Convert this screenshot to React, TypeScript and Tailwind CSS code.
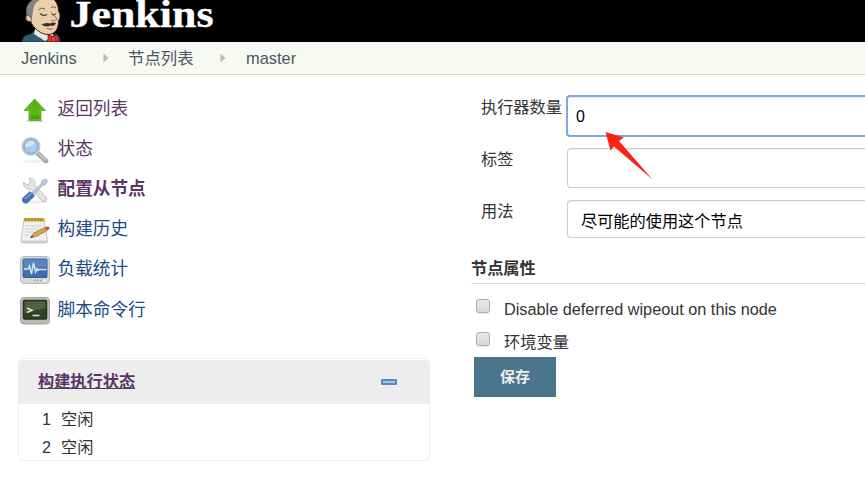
import React from "react";

const FONT = "font-['Liberation_Sans','Noto_Sans_CJK_SC',sans-serif]";

function Butler() {
  return (
    <svg className="block h-[42px] w-[42px] shrink-0" viewBox="0 0 42 42">
      <path d="M1 42 C2 37 4 35 9 34.500 L14 31 L26 38 L34 34 C38 35 39 38 39 42Z" fill="#335b6f" stroke="#1d3a49" strokeWidth="1" />
      <path d="M14 29 L13 34 L24 41 L32 36 L32 30Z" fill="#e9e9e8" />
      <path d="M8 20.500 C4 22 3 15 7 15 C4 5 11 -2 22 -3 C33 -4 37 2 37.500 11 C40 15 39 18 37.500 21 C37.500 29 34 34 28 34.500 C20 35 12 28 9.500 21 Z" fill="#e9cfae" stroke="#35281f" strokeWidth="1" />
      <path d="M6 17 C3 7 8 -1 19 -3 L24 -2 C17 0 13 3 12.500 9 L11 17 L9.500 21Z" fill="#83827f" />
      <path d="M8 15.500 C4 14 4 21 8 21.500 C10 22 10.500 20 10.500 18.500 Z" fill="#e9cfae" stroke="#4b3a2d" strokeWidth=".8" />
      <path d="M17.500 10 Q20 6.500 24 9 M30 7.500 Q33 5.500 35 8" fill="none" stroke="#6f5a4a" strokeWidth="1" />
      <path d="M19 13.500 Q22 16.500 26 14.500 M31 14 Q33 16 35 13.500" fill="none" stroke="#4a3a2e" strokeWidth="1.200" />
      <path d="M30 12 Q34 16 36 19 Q34 22 30 20.500" fill="none" stroke="#8c7053" strokeWidth="1" />
      <path d="M20.500 24.500 Q25 22 29 23.500 Q33 21.500 35 23.500 Q33 27 29.500 25.500 Q25 28 20.500 24.500Z" fill="#3b2d24" />
      <path d="M26 28.500 Q29 30 32 28.500" fill="none" stroke="#8c6852" strokeWidth="1" />
      <path d="M27 35 Q29 34 32 37 L36 34.500 Q38.500 37 37.500 42 L33 41 L27 42Z" fill="#d8302c" stroke="#6e1715" strokeWidth=".7" />
      <path d="M31 37h3v4.500h-3z" fill="#ef4a44" stroke="#8b1b19" strokeWidth=".6" />
    </svg>
  );
}

function UpIcon() {
  return (
    <svg className="block h-7 w-7" viewBox="0 0 28 28">
      <defs>
        <linearGradient id="up" x2="0" y2="1"><stop stopColor="#4da514" /><stop offset=".6" stopColor="#5cbd14" /><stop offset="1" stopColor="#3f9808" /></linearGradient>
      </defs>
      <ellipse cx="14" cy="25.300" rx="9.500" ry="1.400" fill="#e0e0e0" />
      <path d="M13.700 3 L24.500 14.500 H20 V24.500 H8 V14.500 H3Z" fill="url(#up)" stroke="#4aa012" strokeWidth=".7" />
      <path d="M13.700 4.700 L22.300 13.700 H19 V23.500 H9 V13.700 H5.200Z" fill="none" stroke="#7fcf40" strokeWidth=".6" />
    </svg>
  );
}

function SearchIcon() {
  return (
    <svg className="block h-7 w-7" viewBox="0 0 28 28">
      <ellipse cx="12" cy="25.500" rx="11" ry="1.500" fill="#f0f0ef" />
      <path d="M17 17.500 L25 25" stroke="#a1a19f" strokeWidth="4.600" strokeLinecap="round" />
      <path d="M17.500 17.500 L24.500 24" stroke="#c9c9c7" strokeWidth="2" strokeLinecap="round" />
      <circle cx="10" cy="10.500" r="8.300" fill="#a5caef" stroke="#c6c6c5" strokeWidth="2.400" />
      <circle cx="10" cy="10.500" r="7" fill="#aacbf0" stroke="#7ba0cf" strokeWidth="1" />
      <path d="M4.500 11 C4.500 6 8 4.500 11.500 5 C14.500 6 13.500 9 9.500 10 Z" fill="#d3e5fa" />
    </svg>
  );
}

function ToolsIcon() {
  return (
    <svg className="block h-7 w-7" viewBox="0 0 28 28">
      <ellipse cx="14" cy="26" rx="12" ry="1.400" fill="#ececec" />
      <path d="M2.500 6.500 L6.500 9 L9.500 7 L8.500 2 C13 2 15 6 13.500 9 L25 21 C27 24 24 27 21 25 L10 13 C6 14 2 11 2.500 6.500Z" fill="#e3e3e1" stroke="#b9b9b7" strokeWidth=".9" />
      <path d="M11 17 L20 8 L21 5 L24.500 3 L26.500 5 L24.500 8.500 L21.500 9.500 L12.500 19Z" fill="#bccbe0" stroke="#93a7c2" strokeWidth=".8" />
      <path d="M9 15.500 L13.500 20 L6 27 C3 28 0 25 2 22Z" fill="#4276b7" stroke="#3565a2" strokeWidth=".8" />
      <path d="M10 17.500 L4 23" stroke="#7fa6d6" strokeWidth="1.400" />
    </svg>
  );
}

function NotepadIcon() {
  return (
    <svg className="block h-7 w-[30px]" viewBox="0 0 30 28">
      <path d="M4 4 H24 L27.500 25 Q27.500 27 25.500 27 H3 Q1 27 1 25Z" fill="#f0f0ee" stroke="#bcbcba" strokeWidth=".9" />
      <path d="M2 25.500h25" stroke="#c6c6c4" strokeWidth="1.600" />
      <path d="M4 2 H24.500 V5.500 H3.500Z" fill="#c6a937" />
      <path d="M6 2v3 M9 2v3 M12 2v3 M15 2v3 M18 2v3 M21 2v3" stroke="#94761d" strokeWidth=".9" />
      <path d="M5.500 10h16 M5 13h14 M5 16h9 M4.500 19h6" stroke="#d0d0ce" strokeWidth="1" />
      <path d="M10.500 21.500 L14 17 L25 11.500 L27 14.500 L16 20.500Z" fill="#dfa556" stroke="#99692f" strokeWidth=".8" />
      <path d="M24.500 11.700 L27 10.600 Q30 10.500 29.500 13 L27 14.600Z" fill="#d9503f" />
      <path d="M10.500 21.500 L12 19.500 L13.300 20.900Z" fill="#292929" />
    </svg>
  );
}

function MonitorIcon() {
  return (
    <svg className="block h-7 w-[30px]" viewBox="0 0 30 28">
      <rect x=".5" y=".5" width="29" height="27" rx="3.500" fill="#d8d9d5" stroke="#b9bab7" />
      <rect x="3" y="3" width="24" height="18.500" rx="1" fill="#3f6eb5" stroke="#365f9f" />
      <path d="M3.500 3.500h23v7q-12 1-23 5z" fill="#5a84c4" />
      <path d="M4 13h4l1.500-3 2 8 2-11 2 9 1.500-3.500 1 2 1-1h7.500" fill="none" stroke="#cfeadb" strokeWidth="1.500" />
      <path d="M14 24.500h9" stroke="#acada9" strokeWidth="1.500" strokeDasharray="2 1" />
      <circle cx="25" cy="24.500" r="1.100" fill="#f4f4f2" />
    </svg>
  );
}

function TerminalIcon() {
  return (
    <svg className="block h-7 w-[30px]" viewBox="0 0 30 28">
      <rect x=".5" y=".5" width="29" height="26.500" rx="3.500" fill="#babbb6" stroke="#a3a4a1" />
      <rect x="3.500" y="3.500" width="23" height="18.500" rx="1" fill="#2f4127" stroke="#263020" strokeWidth="1.500" />
      <path d="M4.500 4.500h21v7q-10 1-21 5z" fill="#4d623d" />
      <path d="M7 11l5 2.300L7 15.500" fill="none" stroke="#dfe6da" strokeWidth="1.500" />
      <path d="M12.500 18.500h7" stroke="#dfe6da" strokeWidth="1.500" />
      <circle cx="21" cy="24.600" r="1.200" fill="#7bea4d" />
    </svg>
  );
}

const tasks = [
  { label: "返回列表", icon: <UpIcon />, style: "text-[#5c3566]" },
  { label: "状态", icon: <SearchIcon />, style: "text-[#5c3566]" },
  { label: "配置从节点", icon: <ToolsIcon />, style: "text-[#5c3566] font-bold" },
  { label: "构建历史", icon: <NotepadIcon />, style: "text-[#204a87]" },
  { label: "负载统计", icon: <MonitorIcon />, style: "text-[#204a87]" },
  { label: "脚本命令行", icon: <TerminalIcon />, style: "text-[#204a87] pt-px" },
];

function Separator() {
  return (
    <svg className="block h-[10px] w-[6px]" viewBox="0 0 6 10">
      <path d="M0.500 0.500 L5.500 5 L0.500 9.500Z" fill="#b9bbb7" />
    </svg>
  );
}

function Checkbox() {
  return <span className="block h-[14px] w-[14px] shrink-0 rounded-[3px] border border-[#adadad] bg-linear-to-b from-[#e9e9e9] to-[#d9d9d9] shadow-[0_1px_1px_rgba(0,0,0,0.08)]" />;
}

export default function App() {
  return (
    <div className={`h-[498px] w-[865px] overflow-hidden bg-white text-[#333] ${FONT}`}>
      <header className="flex h-[42px] bg-black pl-[21px]">
        <Butler />
        <svg className="block h-[42px] w-[155px] overflow-visible" viewBox="0 0 155 42">
          <text x="6.500" y="27.300" textLength="144" lengthAdjust="spacingAndGlyphs" fill="#fff" stroke="#fff" strokeWidth=".3" className="font-['Liberation_Serif',serif] text-[37px] font-bold">Jenkins</text>
        </svg>
      </header>
      <nav className="flex h-[33px] items-center border-b border-[#d3d7cf] bg-[#f6faf2] pl-[21px] text-[16.400px] leading-[32px] text-[#4d545d]">
        <span className="w-[82px]">Jenkins</span>
        <Separator />
        <span className="ml-[19px] w-[92px]">节点列表</span>
        <Separator />
        <span className="ml-[20px]">master</span>
      </nav>
      <div className="flex">
        <aside className="w-[430px] pt-[14px] pl-[18px]">
          <ul>
            {tasks.map((t) => (
              <li key={t.label} className="flex h-10 items-center last:pt-px">
                <span className="flex w-[33px] shrink-0 justify-center pt-[2px]">{t.icon}</span>
                <a className={`ml-[6.500px] text-[17.650px] leading-[39px] ${t.style}`}>{t.label}</a>
              </li>
            ))}
          </ul>
          <section className="mt-[29px] h-[103px] overflow-hidden rounded-[5px] border border-[#ececec] pt-px">
            <div className="flex h-[44px] items-center justify-between rounded-t-[4px] bg-[#ededed] pr-[32px] pl-[19px]">
              <a className="pb-[2px] text-[16.200px] leading-[42px] font-bold text-[#5c3566] underline">构建执行状态</a>
              <span className="h-[6px] w-4 rounded-[1px] border-2 border-[#5c88bd] bg-[#a9c8e8]" />
            </div>
            <ol className="pt-px text-[16.200px] leading-7">
              <li className="flex h-7 pl-[23px]"><span className="w-[19px]">1</span>空闲</li>
              <li className="flex h-7 pl-[23px]"><span className="w-[19px]">2</span>空闲</li>
            </ol>
          </section>
        </aside>
        <main className="relative flex-1 pt-5 pl-[41px]">
          <div className="flex h-[53px] text-[16.200px]">
            <label className="w-[95px] shrink-0 pl-[10px] leading-[25px]">执行器数量</label>
            <input defaultValue="0" className="h-[42px] min-w-0 flex-1 rounded-l-[4px] border-2 border-r-0 border-[#7ba7ef] px-2 pt-[2px] text-base text-black shadow-[inset_0_1px_1px_rgba(0,0,0,0.075)]" />
          </div>
          <div className="flex h-[52px] text-[16.200px]">
            <label className="w-[96px] shrink-0 pl-[10px] leading-[23px]">标签</label>
            <input className="h-10 min-w-0 flex-1 rounded-l-[4px] border border-r-0 border-[#ccc] px-2 text-base shadow-[inset_0_1px_1px_rgba(0,0,0,0.075)]" />
          </div>
          <div className="flex h-[50px] text-[16.200px]">
            <span className="w-[96px] shrink-0 pl-[10px] leading-[23px]">用法</span>
            <div className="h-[38px] min-w-0 flex-1 rounded-l-[4px] border border-r-0 border-[#ccc] pl-[13px] leading-[41px] text-black shadow-[inset_0_1px_1px_rgba(0,0,0,0.075)]">尽可能的使用这个节点</div>
          </div>
          <h2 className="h-[34px] border-b border-[#ddd] text-[16.200px] leading-[37px] font-bold">节点属性</h2>
          <div className="flex h-[33px] pt-[15px] pl-[5px]">
            <Checkbox />
            <span className="ml-[14px] text-[16.250px] leading-5">Disable deferred wipeout on this node</span>
          </div>
          <div className="flex h-[40px] pt-[15px] pl-[5px]">
            <Checkbox />
            <span className="ml-[14px] text-[16.250px] leading-5">环境变量</span>
          </div>
          <button className="ml-[3px] block h-10 w-[82px] border border-[#41758d] bg-[#4b758b] text-[15px] leading-[38px] font-bold text-[#eee]">保存</button>
          <svg className="pointer-events-none absolute top-[56px] left-[175px] h-[49px] w-[49px]" viewBox="0 0 49 49">
            <path d="M0.500 1 L19 6.500 L14 10 L47.500 48.500 L9 15.500 L5.500 19.500Z" fill="#fb2412" />
          </svg>
        </main>
      </div>
    </div>
  );
}
